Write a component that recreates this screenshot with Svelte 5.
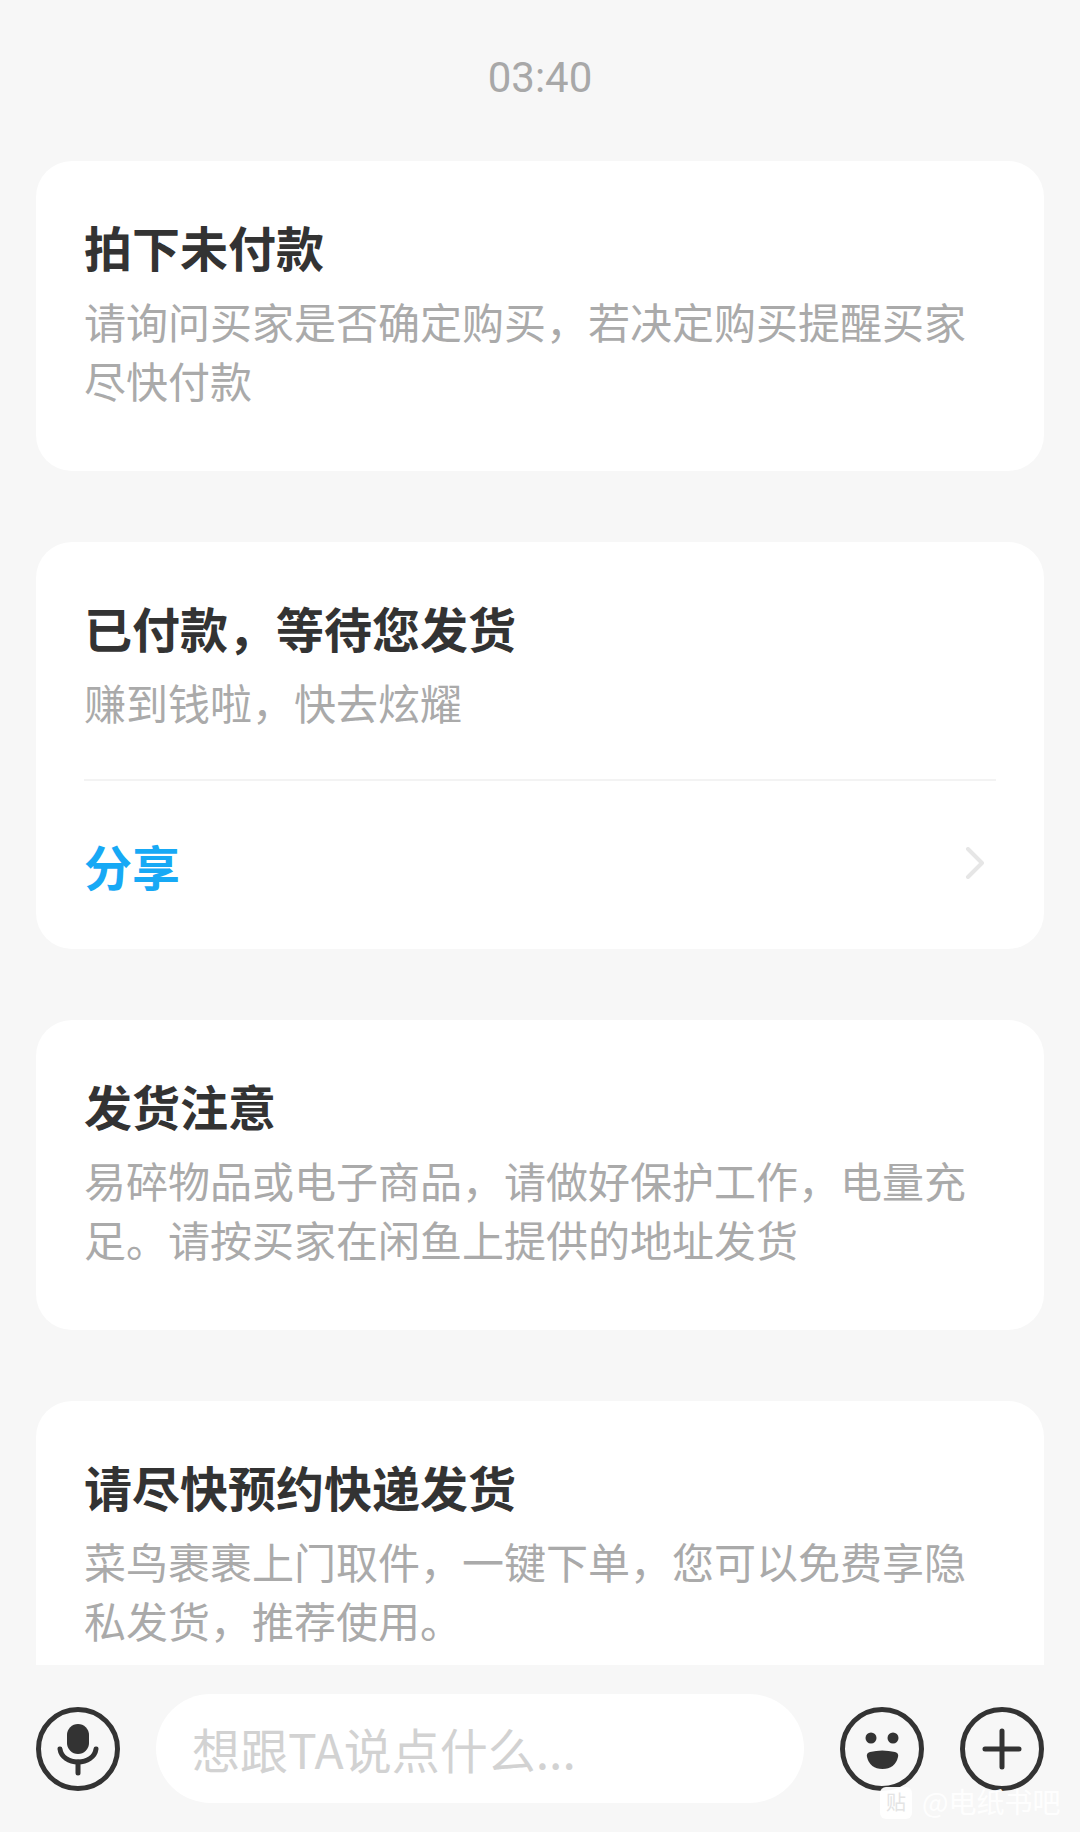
<script>
  const cards = [
    {
      title: '拍下未付款',
      desc: '请询问买家是否确定购买，若决定购买提醒买家尽快付款'
    },
    {
      title: '已付款，等待您发货',
      desc: '赚到钱啦，快去炫耀',
      action: '分享'
    },
    {
      title: '发货注意',
      desc: '易碎物品或电子商品，请做好保护工作，电量充足。请按买家在闲鱼上提供的地址发货'
    },
    {
      title: '请尽快预约快递发货',
      desc: '菜鸟裹裹上门取件，一键下单，您可以免费享隐私发货，推荐使用。'
    }
  ];
</script>

<div class="page">
  <div class="messages">
    <div class="time">03:40</div>
    {#each cards as card}
      <section class="card">
        <div class="body">
          <h2>{card.title}</h2>
          <p>{card.desc}</p>
        </div>
        {#if card.action}
          <div class="action">
            <span>{card.action}</span>
            <svg class="chevron" width="22" height="32" viewBox="0 0 22 32" fill="none">
              <path d="M4 2 L18 16 L4 30" stroke="#e6e6e6" stroke-width="4" stroke-linecap="round" stroke-linejoin="round" />
            </svg>
          </div>
        {/if}
      </section>
    {/each}
  </div>

  <div class="bar">
    <svg class="icon" viewBox="0 0 84 84" fill="none">
      <circle cx="42" cy="42" r="39.5" stroke="#333" stroke-width="5" />
      <rect x="31" y="17" width="22" height="30" rx="11" fill="#333" />
      <path d="M24 42 C25 50 33 55 42 55 C51 55 59 50 60 42" stroke="#333" stroke-width="5" stroke-linecap="round" />
      <path d="M42 55 V66" stroke="#333" stroke-width="5" stroke-linecap="round" />
    </svg>
    <div class="input">想跟TA说点什么...</div>
    <svg class="icon" viewBox="0 0 84 84" fill="none">
      <circle cx="42" cy="42" r="39.5" stroke="#333" stroke-width="5" />
      <circle cx="31" cy="31" r="5.5" fill="#333" />
      <circle cx="53" cy="31" r="5.5" fill="#333" />
      <path d="M30 45 Q42 42 55 45 Q59 46 58 50 Q55 62 42.5 62 Q30 62 27 50 Q26 46 30 45 Z" fill="#333" />
    </svg>
    <svg class="icon" viewBox="0 0 84 84" fill="none">
      <circle cx="42" cy="42" r="39.5" stroke="#333" stroke-width="5" />
      <path d="M42 24 V60 M25 42 H59" stroke="#333" stroke-width="5" stroke-linecap="round" />
    </svg>
  </div>

  <div class="watermark">
    <span class="wm-badge">贴</span>
    <span>@电纸书吧</span>
  </div>
</div>

<style>
  :global(body) {
    margin: 0;
    background: #f7f7f7;
  }

  .page {
    position: relative;
    width: 1080px;
    height: 1832px;
    display: flex;
    flex-direction: column;
    overflow: hidden;
    background: #f7f7f7;
    font-family: "Noto Sans CJK SC", "Noto Sans", sans-serif;
  }

  .messages {
    flex: 1;
    min-height: 0;
    overflow: hidden;
    display: flex;
    flex-direction: column;
    gap: 71px;
    padding: 0 36px;
  }

  .time {
    flex: none;
    height: 90px;
    box-sizing: border-box;
    padding-top: 51px;
    line-height: 54px;
    text-align: center;
    font-family: Roboto, sans-serif;
    font-size: 42px;
    color: #a8a8a8;
  }

  .card {
    flex: none;
    background: #fff;
    border-radius: 36px;
  }

  .body {
    padding: 55px 48px 62px;
  }

  h2 {
    margin: 0 0 15px;
    font-size: 48px;
    line-height: 60px;
    font-weight: 700;
    color: #333;
  }

  p {
    margin: 0;
    font-size: 42px;
    line-height: 59px;
    color: #aaa;
  }

  .action {
    margin: -14px 48px 0;
    height: 168px;
    border-top: 2px solid #f3f3f3;
    display: flex;
    align-items: center;
    justify-content: space-between;
    padding-right: 10px;
    font-size: 48px;
    font-weight: 700;
    color: #17a9f5;
  }

  .chevron {
    margin-bottom: 4px;
  }

  .bar {
    flex: none;
    height: 167px;
    box-sizing: border-box;
    padding: 0 36px;
    display: flex;
    align-items: center;
    gap: 36px;
    background: #f7f7f7;
  }

  .icon {
    flex: none;
    width: 84px;
    height: 84px;
  }

  .input {
    flex: 1;
    height: 109px;
    line-height: 109px;
    padding-left: 36px;
    border-radius: 55px;
    background: #fff;
    font-size: 48px;
    color: #d2d2d2;
  }

  .watermark {
    position: absolute;
    left: 880px;
    top: 1787px;
    display: flex;
    align-items: flex-start;
    gap: 10px;
    font-size: 28px;
    line-height: 28px;
    color: rgba(255, 255, 255, 0.95);
    white-space: nowrap;
  }

  .wm-badge {
    width: 32px;
    height: 32px;
    line-height: 30px;
    border-radius: 6px;
    background: rgba(255, 255, 255, 0.95);
    color: #e4e4e4;
    font-size: 20px;
    text-align: center;
  }
</style>
